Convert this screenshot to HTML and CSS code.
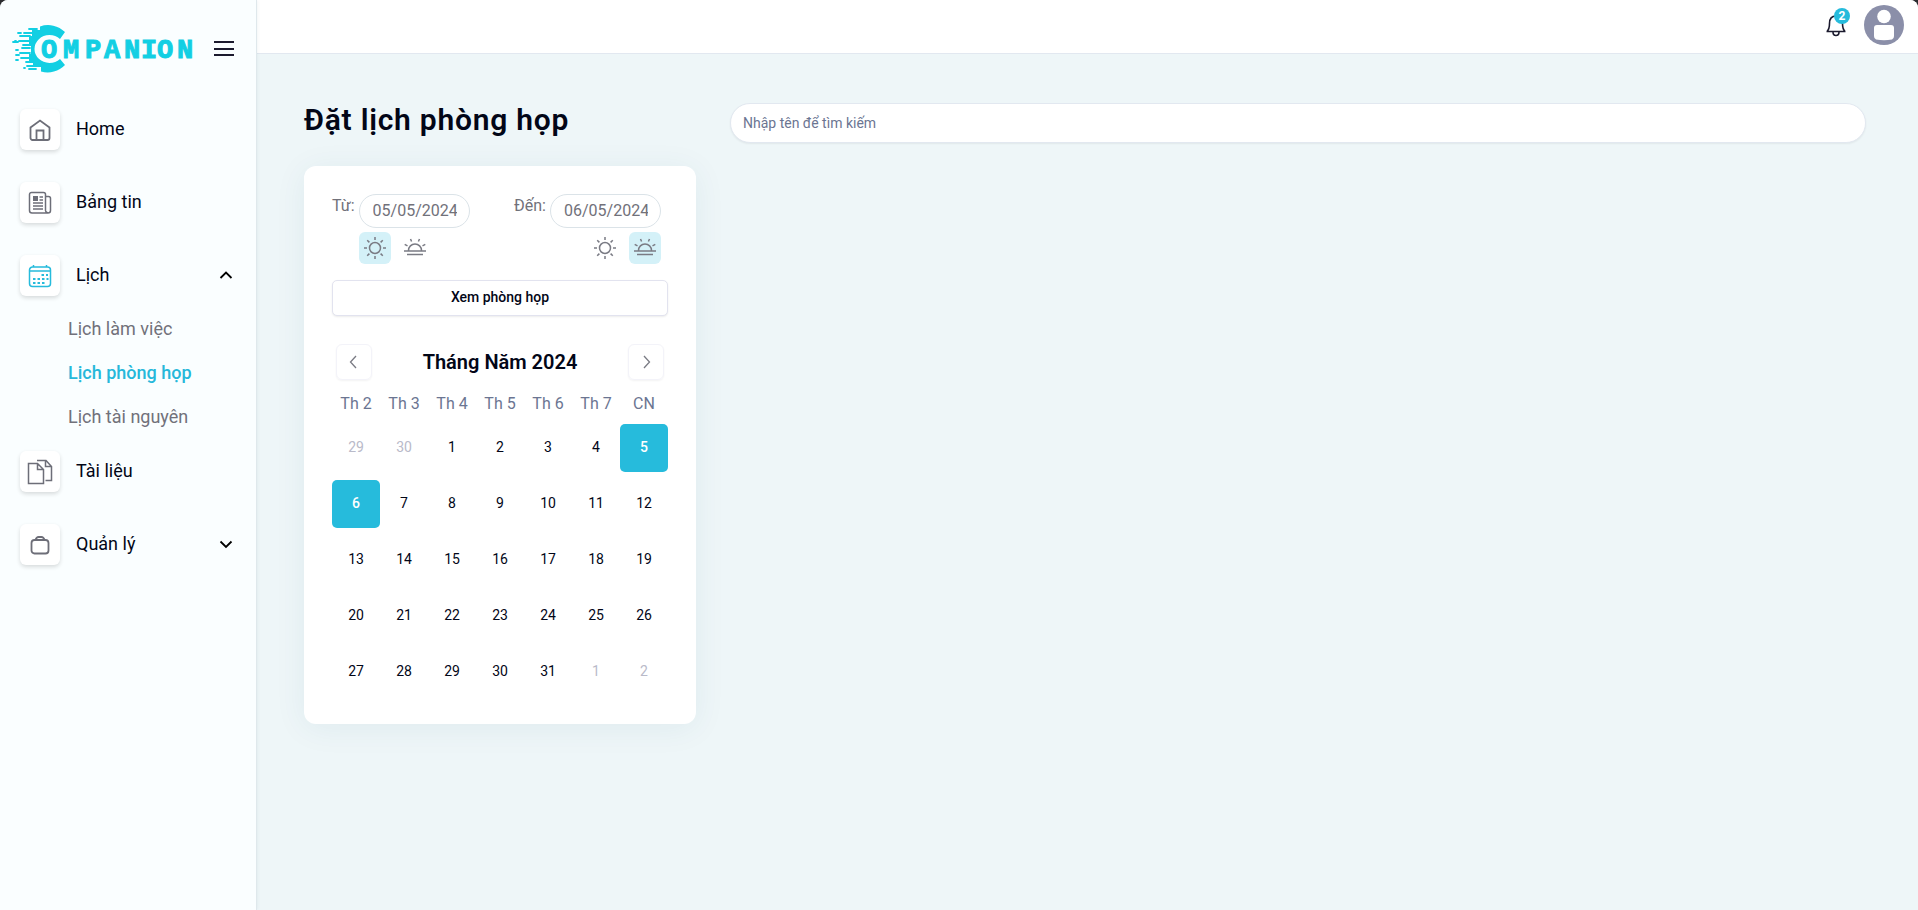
FILE: index.html
```
<!DOCTYPE html>
<html lang="vi">
<head>
<meta charset="utf-8">
<title>Đặt lịch phòng họp</title>
<link rel="stylesheet" href="styles.css">
</head>
<body>
<svg class="defs" aria-hidden="true">
  <symbol id="sun" viewBox="0 0 24 24">
    <circle cx="12" cy="12" r="5.5"/>
    <path d="M12 1v3M12 20v3M1 12h3M20 12h3M4.2 4.2l2.2 2.2M17.6 17.6l2.2 2.2M4.2 19.8l2.2-2.2M17.6 6.4l2.2-2.2"/>
  </symbol>
  <symbol id="sunset" viewBox="0 0 24 24">
    <path d="M1 15h22M4 18.500h16M5.500 14.500a6.500 6.500 0 0 1 13 0M7.500 3l1.100 2.500M16.500 3l-1.100 2.500M1.700 8.300l2.800 1.500M22.300 8.300l-2.800 1.500"/>
  </symbol>
</svg>
<div class="app">
  <aside class="sidebar">
    <div class="brand">
      <a href="#" class="logo" aria-label="Companion">
        <svg width="184" height="50" viewBox="0 0 184 50">
          <path fill="#12cfe3" d="M53 8A24 24 0 0 0 28 2.500V6H20V12H17V20H19V30H17V37H21V43H29V47.500A24 24 0 0 0 53 41L48 35A15 14 0 1 1 48 15Z"/>
          <path fill="none" stroke="#12cfe3" stroke-width="1.8" stroke-linecap="round" d="M17 5h8M6 9h3M12 9h8M8 12h10M3 17h1M7 17h11M1 18h5M11 21h8M10 24h8M4 26h2M8 29h10M4 31h3M9 34h9M4 36h2M14 38h8M15 42h8M12 44h1M17 45h7"/>
          <text class="wordmark" x="29 51 73 92 112 129 145 165" y="34">OMPANION</text>
        </svg>
      </a>
      <button class="menu" type="button" aria-label="Menu">
        <svg width="22" height="18" viewBox="0 0 22 18"><path d="M1 2h20M1 9h20M1 15h20" stroke="#1b1a2e" stroke-width="2"/></svg>
      </button>
    </div>
    <nav>
      <ul class="nav">
        <li><a href="#"><span class="tile"><svg width="24" height="24" viewBox="0 0 24 24"><path stroke-width="1.800" d="M2.500 9.500 12 2.500l9.500 7V20a2 2 0 0 1-2 2h-15a2 2 0 0 1-2-2zM8.500 22V12.500h7V22"/></svg></span><span>Home</span></a></li>
        <li><a href="#"><span class="tile"><svg width="24" height="24" viewBox="0 0 24 24"><path d="M17.500 5.500h3a2 2 0 0 1 2 2v12a2.500 2.500 0 0 1-2.500 2.500H4a2.500 2.500 0 0 1-2.500-2.500v-16a2 2 0 0 1 2-2h12a2 2 0 0 1 2 2v15a3 3 0 0 0 2.500 3.500"/><path d="M5 5h5v5H5z" fill="#6d6e78" stroke="none"/><path d="M11.500 6H15M11.500 9H15M5 12h10M5 15h10M5 18h10"/></svg></span><span>Bảng tin</span></a></li>
        <li class="group">
          <a href="#" aria-expanded="true"><span class="tile active"><svg width="24" height="24" viewBox="0 0 24 24"><path d="M4.500 3h15a3 3 0 0 1 3 3v13.500a3 3 0 0 1-3 3h-15a3 3 0 0 1-3-3V6a3 3 0 0 1 3-3zM1.500 7h21M5.500 1v2M18.500 1v2"/><path d="M13.500 11h2.500m2 0h2M5 15h2.500m2 0h2.500m2 0h2.500m2 0h2M5 19h2.500m2 0h2.500m2 0h2.500" stroke-width="2.200"/></svg></span><span>Lịch</span><svg class="caret" width="14" height="14" viewBox="0 0 14 14"><path d="M1.500 10 7 4.500l5.500 5.500"/></svg></a>
          <ul class="subnav">
            <li><a href="#">Lịch làm việc</a></li>
            <li><a href="#" class="current" aria-current="page">Lịch phòng họp</a></li>
            <li><a href="#">Lịch tài nguyên</a></li>
          </ul>
        </li>
        <li><a href="#"><span class="tile"><svg width="26" height="26" viewBox="0 0 26 26"><path d="M1.500 4.500h9l6 6v14h-15zM10.500 4.500v6h6M10 1.500h9l5.500 6v14H18.500M18.500 1.500v6h6"/></svg></span><span>Tài liệu</span></a></li>
        <li><a href="#"><span class="tile"><svg width="24" height="24" viewBox="0 0 24 24"><g stroke-width="1.800"><rect x="3.500" y="7" width="17" height="13.500" rx="3"/><path d="M7.500 7q1-3 3-3h3q2 0 3 3"/></g></svg></span><span>Quản lý</span><svg class="caret" width="14" height="14" viewBox="0 0 14 14"><path d="M1.500 4.500 7 10l5.500-5.500"/></svg></a></li>
      </ul>
    </nav>
  </aside>
  <div class="page">
    <header class="topbar">
      <button class="bell" type="button" aria-label="Thông báo">
        <svg width="22" height="24" viewBox="0 0 22 24"><path d="M1.500 18.500h19M2 18.500q2.500-2.500 2.500-8Q4.500 3 11 3t6.500 7.500q0 5.500 2.500 8M8 19q0 3.500 3 3.500t3-3.500" fill="none" stroke="#1b1a2e" stroke-width="1.600"/></svg>
        <span class="badge">2</span>
      </button>
      <button class="avatar" type="button" aria-label="Tài khoản">
        <svg width="40" height="40" viewBox="0 0 40 40"><circle cx="20" cy="20" r="20" fill="#8b8fa9"/><circle cx="20" cy="11.500" r="6.800" fill="#fff"/><path d="M10 23q0-3 3-3h14q3 0 3 3v8q0 3-2 3.500-8 1.500-16 0-2-.5-2-3.500z" fill="#fff"/></svg>
      </button>
    </header>
    <main class="content">
      <section class="booking">
        <h1>Đặt lịch phòng họp</h1>
        <div class="card">
          <div class="range">
            <div class="field">
              <label for="from">Từ:</label>
              <div class="stack">
                <input id="from" type="text" value="05/05/2024">
                <div class="times">
                  <button type="button" class="time on" aria-label="Sáng"><svg width="24" height="24"><use href="#sun"/></svg></button>
                  <button type="button" class="time" aria-label="Chiều"><svg width="24" height="24"><use href="#sunset"/></svg></button>
                </div>
              </div>
            </div>
            <div class="field">
              <label for="to">Đến:</label>
              <div class="stack">
                <input id="to" type="text" value="06/05/2024">
                <div class="times end">
                  <button type="button" class="time" aria-label="Sáng"><svg width="24" height="24"><use href="#sun"/></svg></button>
                  <button type="button" class="time on" aria-label="Chiều"><svg width="24" height="24"><use href="#sunset"/></svg></button>
                </div>
              </div>
            </div>
          </div>
          <button type="button" class="view">Xem phòng họp</button>
          <div class="month">
            <button type="button" class="step" aria-label="Tháng trước"><svg width="16" height="16" viewBox="0 0 16 16"><path d="M10 2 4.500 8l5.500 6"/></svg></button>
            <h2>Tháng Năm 2024</h2>
            <button type="button" class="step" aria-label="Tháng sau"><svg width="16" height="16" viewBox="0 0 16 16"><path d="M6 2 11.500 8l-5.500 6"/></svg></button>
          </div>
          <table class="days">
            <thead><tr><th>Th 2</th><th>Th 3</th><th>Th 4</th><th>Th 5</th><th>Th 6</th><th>Th 7</th><th>CN</th></tr></thead>
            <tbody>
              <tr><td class="out"><span>29</span></td><td class="out"><span>30</span></td><td><span>1</span></td><td><span>2</span></td><td><span>3</span></td><td><span>4</span></td><td class="sel"><span>5</span></td></tr>
              <tr><td class="sel"><span>6</span></td><td><span>7</span></td><td><span>8</span></td><td><span>9</span></td><td><span>10</span></td><td><span>11</span></td><td><span>12</span></td></tr>
              <tr><td><span>13</span></td><td><span>14</span></td><td><span>15</span></td><td><span>16</span></td><td><span>17</span></td><td><span>18</span></td><td><span>19</span></td></tr>
              <tr><td><span>20</span></td><td><span>21</span></td><td><span>22</span></td><td><span>23</span></td><td><span>24</span></td><td><span>25</span></td><td><span>26</span></td></tr>
              <tr><td><span>27</span></td><td><span>28</span></td><td><span>29</span></td><td><span>30</span></td><td><span>31</span></td><td class="out"><span>1</span></td><td class="out"><span>2</span></td></tr>
            </tbody>
          </table>
        </div>
      </section>
      <section class="results">
        <input class="search" type="search" placeholder="Nhập tên để tìm kiếm" aria-label="Nhập tên để tìm kiếm">
      </section>
    </main>
  </div>
</div>
</body>
</html>
```

FILE: styles.css
```
* { box-sizing: border-box; }
html { background: #2b2b2f; }
body { margin: 0; font-family: Roboto, "Noto Sans", sans-serif; font-size: 16px; line-height: 24px; color: #020617; }
button, input { font: inherit; color: inherit; }
button { padding: 0; border: 0; background: none; cursor: pointer; }
a { color: inherit; text-decoration: none; }
ul { list-style: none; margin: 0; padding: 0; }
h1, h2 { margin: 0; }
svg { display: block; }
.defs { display: none; }

.app { display: flex; min-height: 100vh; border-radius: 8px 8px 0 0; overflow: hidden; background: #eef6f8; }

.sidebar { flex: 0 0 257px; background: #fafeff; border-right: 1px solid #dfe8ec; box-shadow: 0 0 4px rgba(30, 70, 90, 0.08); z-index: 1; }
.brand { display: flex; align-items: center; padding: 24px 20px 0 12px; gap: 17px; height: 74px; }
.wordmark { font-family: "Liberation Mono", monospace; font-weight: 700; font-size: 27px; fill: #12cfe3; stroke: #12cfe3; stroke-width: 1px; }
.nav { padding: 35px 20px 0; }
.nav > li { margin-bottom: 33px; }
.nav > .group { margin-bottom: 12px; }
.nav > li > a { display: flex; align-items: flex-start; gap: 16px; height: 40px; padding-right: 3px; font-size: 18px; line-height: 40px; }
.tile { display: flex; align-items: center; justify-content: center; width: 40px; height: 41px; border-radius: 6px; background: #fff; box-shadow: 0 2px 4px rgba(0, 0, 0, 0.14); }
.tile svg { fill: none; stroke: #6d6e78; stroke-width: 1.5; }
.tile.active svg { stroke: #26bbdc; }
.caret { margin: 13px 0 0 auto; fill: none; stroke: #000; stroke-width: 1.8; }
.subnav { margin: 12px 0 0 48px; }
.subnav a { display: flex; align-items: center; height: 44px; font-size: 18px; color: #71717a; }
.subnav .current { color: #26b8da; font-weight: 500; }

.page { flex: 1; min-width: 0; }
.topbar { display: flex; justify-content: flex-end; align-items: center; gap: 17px; height: 54px; padding: 0 14px 4px; background: #fff; border-bottom: 1px solid #e2e8f0; }
.bell { position: relative; }
.badge { position: absolute; top: -5px; right: -3px; width: 16px; height: 16px; border-radius: 50%; background: #26bbdc; color: #fff; font-size: 12px; font-weight: 700; line-height: 16px; text-align: center; }

.content { display: flex; gap: 34px; padding: 49px 52px 0 47px; }
.booking { flex: 0 0 392px; }
h1 { height: 63px; font-size: 30px; line-height: 34px; font-weight: 600; letter-spacing: 0.025em; }
.card { padding: 28px; border-radius: 12px; background: #fff; box-shadow: 0 4px 32px rgba(30, 90, 110, 0.07); }
.range { display: flex; justify-content: space-between; padding-right: 7px; }
.field { display: flex; gap: 4px; color: #71717a; }
.stack { display: grid; gap: 4px; }
.field input { width: 111px; height: 34px; padding: 0 12px 2px 13px; border: 1px solid #dbe3e8; border-radius: 17px; background: #fff; }
.times { display: flex; gap: 8px; }
.times.end { justify-content: flex-end; }
.time { display: grid; place-items: center; width: 32px; height: 32px; border-radius: 6px; }
.time.on { background: #d4f1f8; }
.time svg { fill: none; stroke: #7a7b84; stroke-width: 1.5; }
.view { display: block; width: 100%; height: 36px; margin-top: 16px; padding-bottom: 2px; border: 1px solid #e2e3ef; border-radius: 5px; background: #fff; box-shadow: 0 1px 2px rgba(0, 0, 0, 0.08); font-size: 14px; font-weight: 500; }
.month { display: flex; align-items: center; justify-content: space-between; padding: 28px 4px 0; }
.month h2 { font-size: 20px; font-weight: 600; }
.step { display: grid; place-items: center; width: 36px; height: 36px; border: 1px solid #f3f3f9; border-radius: 6px; box-shadow: 0 1px 2px rgba(0, 0, 0, 0.05); }
.step svg { fill: none; stroke: #7a7b84; stroke-width: 1.3; }
.days { width: 100%; margin-top: 12px; border-collapse: separate; border-spacing: 0; table-layout: fixed; text-align: center; }
.days th { height: 24px; padding: 0; font-weight: 400; color: #6b7592; }
.days td { padding: 8px 0 0; font-size: 14px; }
.days td span { display: block; height: 48px; line-height: 47px; border-radius: 5px; }
.days .out { color: #b9bac9; }
.days .sel span { background: #26bbdc; color: #fff; font-weight: 500; }

.results { flex: 1; min-width: 0; }
.search { width: 100%; height: 40px; padding: 0 12px; border: 1px solid #e2e8f0; border-radius: 20px; background: #fff; box-shadow: 0 1px 2px rgba(0, 0, 0, 0.06); font-size: 14px; appearance: none; }
.search::placeholder { color: #6b7592; opacity: 1; }
```
